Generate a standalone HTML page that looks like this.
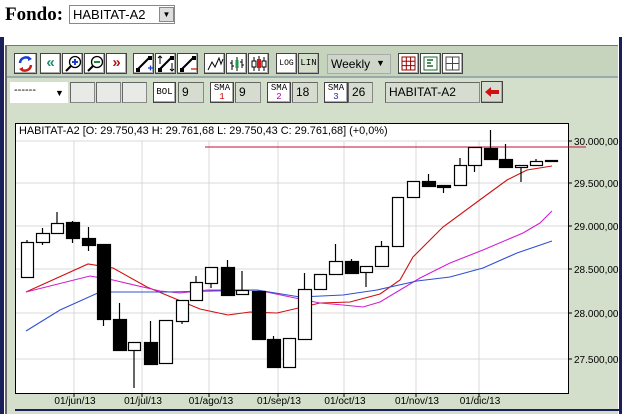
<!DOCTYPE html>
<html><head><meta charset="utf-8"><style>
body{margin:0;width:622px;height:414px;overflow:hidden;background:#fff;font-family:"Liberation Sans",sans-serif;position:relative}
.a{position:absolute}
.btn{position:absolute;width:21px;height:21px;background:#fff;border:1px solid #444;box-sizing:border-box;box-shadow:inset -1px -1px 0 #aaa}
.inp{position:absolute;height:21px;background:#d6dccf;border:1px solid #888;box-sizing:border-box;font-size:12px;padding:2px 3px;border-top-color:#666;border-left-color:#666}
.sma{font-size:9px;text-align:center;line-height:9px;font-family:"Liberation Mono",monospace;padding-top:1px}
</style></head><body>
<div class="a" style="left:5px;top:4px;font:bold 19px 'Liberation Serif',serif">Fondo:</div>
<div class="a" style="left:69px;top:5px;width:106px;height:19px;border:1px solid #888;box-sizing:border-box;font-size:13px;padding:1px 3px">HABITAT-A2</div>
<div class="a" style="left:159px;top:7px;width:15px;height:15px;background:#ddd;border:1px solid #888;box-sizing:border-box;font-size:8px;text-align:center;line-height:13px">▼</div>
<div class="a" style="left:0;top:37px;width:4px;height:377px;background:#1a1f5a"></div>
<div class="a" style="left:619px;top:37px;width:3px;height:377px;background:#1a1f5a"></div>
<div class="a" style="left:5px;top:45px;width:613px;height:369px;background:#d3dfca;border-left:2px solid #666;border-top:1px solid #777;box-sizing:border-box"></div>
<div class="a" style="left:7px;top:46px;width:611px;height:30px;background:#c6d3bd;border-bottom:2px solid #9aa"></div>
<div class="a" style="left:15px;top:409px;width:604px;height:2px;background:#1a1f5a"></div>
<!-- row1 buttons -->
<div class="btn" style="left:14px;top:53px;width:23px"><svg width="21" height="19"><path d="M5 9a6 6 0 0 1 10-4" stroke="#1b3fd0" stroke-width="2.5" fill="none"/><path d="M13 2l4 3-4 2z" fill="#1b3fd0"/><path d="M16 11a6 6 0 0 1-10 4" stroke="#d01b1b" stroke-width="2.5" fill="none"/><path d="M8 18l-4-3 4-2z" fill="#d01b1b"/></svg></div>
<div class="btn" style="left:40px;top:53px;color:#1a8a6a;font-weight:bold;font-size:15px;text-align:center;line-height:18px">«</div>
<div class="btn" style="left:62px;top:53px"><svg width="20" height="19"><circle cx="12" cy="8" r="5.5" stroke="#000" fill="#fff" stroke-width="1.3"/><path d="M8 12l-5 5" stroke="#000" stroke-width="2"/><path d="M9 8h6M12 5v6" stroke="#1b3fd0" stroke-width="2"/></svg></div>
<div class="btn" style="left:84px;top:53px"><svg width="20" height="19"><circle cx="12" cy="8" r="5.5" stroke="#000" fill="#fff" stroke-width="1.3"/><path d="M8 12l-5 5" stroke="#000" stroke-width="2"/><path d="M9 8h6" stroke="#1a8a3a" stroke-width="2"/></svg></div>
<div class="btn" style="left:106px;top:53px;color:#b01818;font-weight:bold;font-size:15px;text-align:center;line-height:18px">»</div>
<div class="btn" style="left:133px;top:53px"><svg width="20" height="19"><path d="M3 16L16 3" stroke="#000" stroke-width="2"/><rect x="2" y="14" width="4" height="4"/><rect x="14" y="2" width="4" height="4"/><path d="M14 14h5M16.5 11.5v5" stroke="#1b3fd0" stroke-width="1.3"/></svg></div>
<div class="btn" style="left:155px;top:53px"><svg width="20" height="19"><path d="M3 16L16 3" stroke="#000" stroke-width="2"/><rect x="2" y="14" width="4" height="4"/><rect x="14" y="2" width="4" height="4"/><path d="M4 10V2M2 4l2-2 2 2M16 9v8M14 15l2 2 2-2" stroke="#000" stroke-width="1" fill="none"/></svg></div>
<div class="btn" style="left:177px;top:53px"><svg width="20" height="19"><path d="M3 16L16 3" stroke="#000" stroke-width="2"/><rect x="2" y="14" width="4" height="4"/><rect x="14" y="2" width="4" height="4"/><path d="M13 15h6" stroke="#d01b1b" stroke-width="1.3"/></svg></div>
<div class="btn" style="left:204px;top:53px"><svg width="20" height="19"><path d="M3 16l4-8 3 5 4-9 2 6 2-5" stroke="#000" fill="none"/></svg></div>
<div class="btn" style="left:226px;top:53px"><svg width="20" height="19"><path d="M5 6v10M3 9h2M5 12h2M10 3v14M15 5v9M13 8h2M15 11h2" stroke="#000"/><path d="M10 6v8" stroke="#1a9a4a" stroke-width="3"/></svg></div>
<div class="btn" style="left:248px;top:53px"><svg width="20" height="19"><path d="M5 3v14M10 2v15M15 3v14" stroke="#000"/><rect x="3" y="7" width="4" height="6" fill="#fff" stroke="#000"/><rect x="8" y="5" width="4" height="9" fill="#d01b1b"/><rect x="13" y="7" width="4" height="6" fill="#fff" stroke="#000"/></svg></div>
<div class="btn" style="left:276px;top:53px;font-size:8px;text-align:center;line-height:19px;font-family:'Liberation Mono',monospace">LOG</div>
<div class="btn" style="left:298px;top:53px;font-size:9px;text-align:center;line-height:19px;font-family:'Liberation Mono',monospace;background:#d3dfca">LIN</div>
<div class="inp" style="left:327px;top:54px;width:64px;height:20px;background:#cdd6c8;border:1px solid #aaa;font-size:12px">Weekly</div>
<div class="a" style="left:376px;top:58px;font-size:9px">▼</div>
<div class="btn" style="left:398px;top:53px"><svg width="19" height="19"><rect x="3" y="3" width="13" height="13" fill="none" stroke="#900"/><path d="M3 7.3h13M3 11.6h13M7.3 3v13M11.6 3v13" stroke="#900"/></svg></div>
<div class="btn" style="left:420px;top:53px"><svg width="19" height="19"><rect x="3" y="3" width="13" height="13" fill="none" stroke="#1a6a2a"/><path d="M6 6h6M6 9h4M6 12h6" stroke="#1a6a2a" stroke-width="1.5"/></svg></div>
<div class="btn" style="left:442px;top:53px"><svg width="19" height="19"><rect x="3" y="3" width="13" height="13" fill="none" stroke="#444"/><path d="M3 9.5h13M9.5 3v13" stroke="#444"/></svg></div>
<!-- row2 -->
<div class="a" style="left:10px;top:82px;width:58px;height:21px;background:#fff;font-size:11px;padding:2px 4px;box-sizing:border-box">------</div>
<div class="a" style="left:55px;top:88px;font-size:9px">▼</div>
<div class="inp" style="left:70px;top:82px;width:25px;background:#e8ebe5"></div>
<div class="inp" style="left:96px;top:82px;width:25px;background:#e8ebe5"></div>
<div class="inp" style="left:122px;top:82px;width:25px;background:#e8ebe5"></div>
<div class="btn" style="left:153px;top:82px;width:23px;font-size:9px;text-align:center;line-height:19px;font-family:'Liberation Mono',monospace">BOL</div>
<div class="inp" style="left:178px;top:82px;width:26px">9</div>
<div class="btn sma" style="left:210px;top:82px;width:24px">SMA<br><span style="color:#c00">1</span></div>
<div class="inp" style="left:235px;top:82px;width:26px">9</div>
<div class="btn sma" style="left:267px;top:82px;width:24px">SMA<br><span style="color:#a0a">2</span></div>
<div class="inp" style="left:292px;top:82px;width:26px">18</div>
<div class="btn sma" style="left:324px;top:82px;width:24px">SMA<br><span style="color:#22a">3</span></div>
<div class="inp" style="left:348px;top:82px;width:25px">26</div>
<div class="inp" style="left:385px;top:82px;width:95px">HABITAT-A2</div>
<div class="btn" style="left:481px;top:81px;width:22px;height:22px;background:#d6dccf"><svg width="20" height="20"><path d="M3 10l6-5v3h8v4H9v3z" fill="#d01010"/></svg></div>
<!-- chart -->
<svg class="a" style="left:0;top:0" width="622" height="414" font-family="Liberation Sans,sans-serif">
<rect x="15.5" y="123.5" width="553" height="270" fill="#fff" stroke="#000"/>
<g stroke="#d8d8d8">
<path d="M16 141H568M16 183H568M16 226H568M16 269H568M16 313H568M16 359H568"/>
<path d="M74 141V393M142 141V393M209 141V393M278 141V393M344 141V393M416 141V393M479 141V393"/>
</g>
<g stroke="#000"><path d="M74 393v4M142 393v4M209 393v4M278 393v4M344 393v4M416 393v4M479 393v4M568 141h4M568 183h4M568 226h4M568 269h4M568 313h4M568 359h4"/></g>
<line x1="205" y1="147" x2="586" y2="147" stroke="#c01030"/>
<g font-size="10" fill="#000">
<text x="19" y="134" font-size="10.9">HABITAT-A2 [O: 29.750,43  H: 29.761,68  L: 29.750,43  C: 29.761,68] (+0,0%)</text>
<g font-size="10"><text x="574" y="145">30.000,00</text><text x="574" y="187">29.500,00</text><text x="574" y="230">29.000,00</text><text x="574" y="273">28.500,00</text><text x="574" y="317">28.000,00</text><text x="574" y="363">27.500,00</text></g>
<g text-anchor="middle"><text x="75" y="404">01/jun/13</text><text x="143" y="404">01/jul/13</text><text x="211" y="404">01/ago/13</text><text x="279" y="404">01/sep/13</text><text x="345" y="404">01/oct/13</text><text x="417" y="404">01/nov/13</text><text x="480" y="404">01/dic/13</text></g>
</g>
<g fill="none" stroke-width="1.1">
<polyline stroke="#d01010" points="26,292 88,264 113,268 147,287 200,309 228,315 250,312 277,313 320,303 350,302 380,294 400,280 413,257 443,227 477,202 507,180 527,170 552,166"/>
<polyline stroke="#d020d0" points="26,292 90,276 113,280 160,291 180,293 207,290 257,290 300,299 320,303 343,305 363,307 380,302 400,290 420,278 450,263 483,250 523,233 540,223 552,211"/>
<polyline stroke="#3050d0" points="26,331 60,310 100,292 167,292 257,290 300,297 343,295 377,290 417,281 450,277 483,268 517,253 552,241"/>
</g>
<g stroke="#000" stroke-width="1.2" id="c"></g>
</svg>
<script>
var d=[[21,33,242,277,0,240,277],[36,49,233,242,0,228,245],[51,63,223,233,0,212,233],[66,79,222,238,1,221,243],[82,95,238,245,1,227,251],[97,110,244,319,1,244,326],[113,126,319,350,1,303,350],[128,140,342,350,0,342,388],[144,157,342,364,1,321,364],[159,172,320,363,0,320,363],[176,188,300,321,0,300,324],[190,202,282,300,0,276,300],[205,217,267,283,0,267,288],[221,234,267,295,1,260,295],[236,248,290,294,0,271,294],[252,265,291,339,1,291,339],[267,280,339,367,1,336,367],[283,295,338,367,0,338,367],[298,311,289,339,0,273,339],[314,326,274,289,0,274,289],[329,342,261,274,0,244,274],[345,358,261,273,1,259,273],[360,372,266,272,0,266,287],[375,388,246,266,0,241,266],[392,403,197,246,0,197,246],[407,419,181,197,0,181,197],[422,435,181,186,1,174,186],[437,450,185,187,1,185,193],[454,466,165,185,0,158,185],[468,481,147,165,0,147,172],[484,497,148,159,1,130,159],[499,512,159,167,1,144,167],[515,527,165,167,0,165,182],[530,542,161,165,0,159,165],[545,557,160,161,1,160,161]];
var s='',g=document.getElementById('c');
d.forEach(function(c){var m=(c[0]+c[1])/2;s+='<line x1="'+m+'" x2="'+m+'" y1="'+c[5]+'" y2="'+c[6]+'"/>';s+='<rect x="'+c[0]+'.5" y="'+c[2]+'.5" width="'+(c[1]-c[0])+'" height="'+Math.max(1,c[3]-c[2])+'" fill="'+(c[4]?'#000':'#fff')+'"/>';});
g.innerHTML=s;
</script>
</body></html>
